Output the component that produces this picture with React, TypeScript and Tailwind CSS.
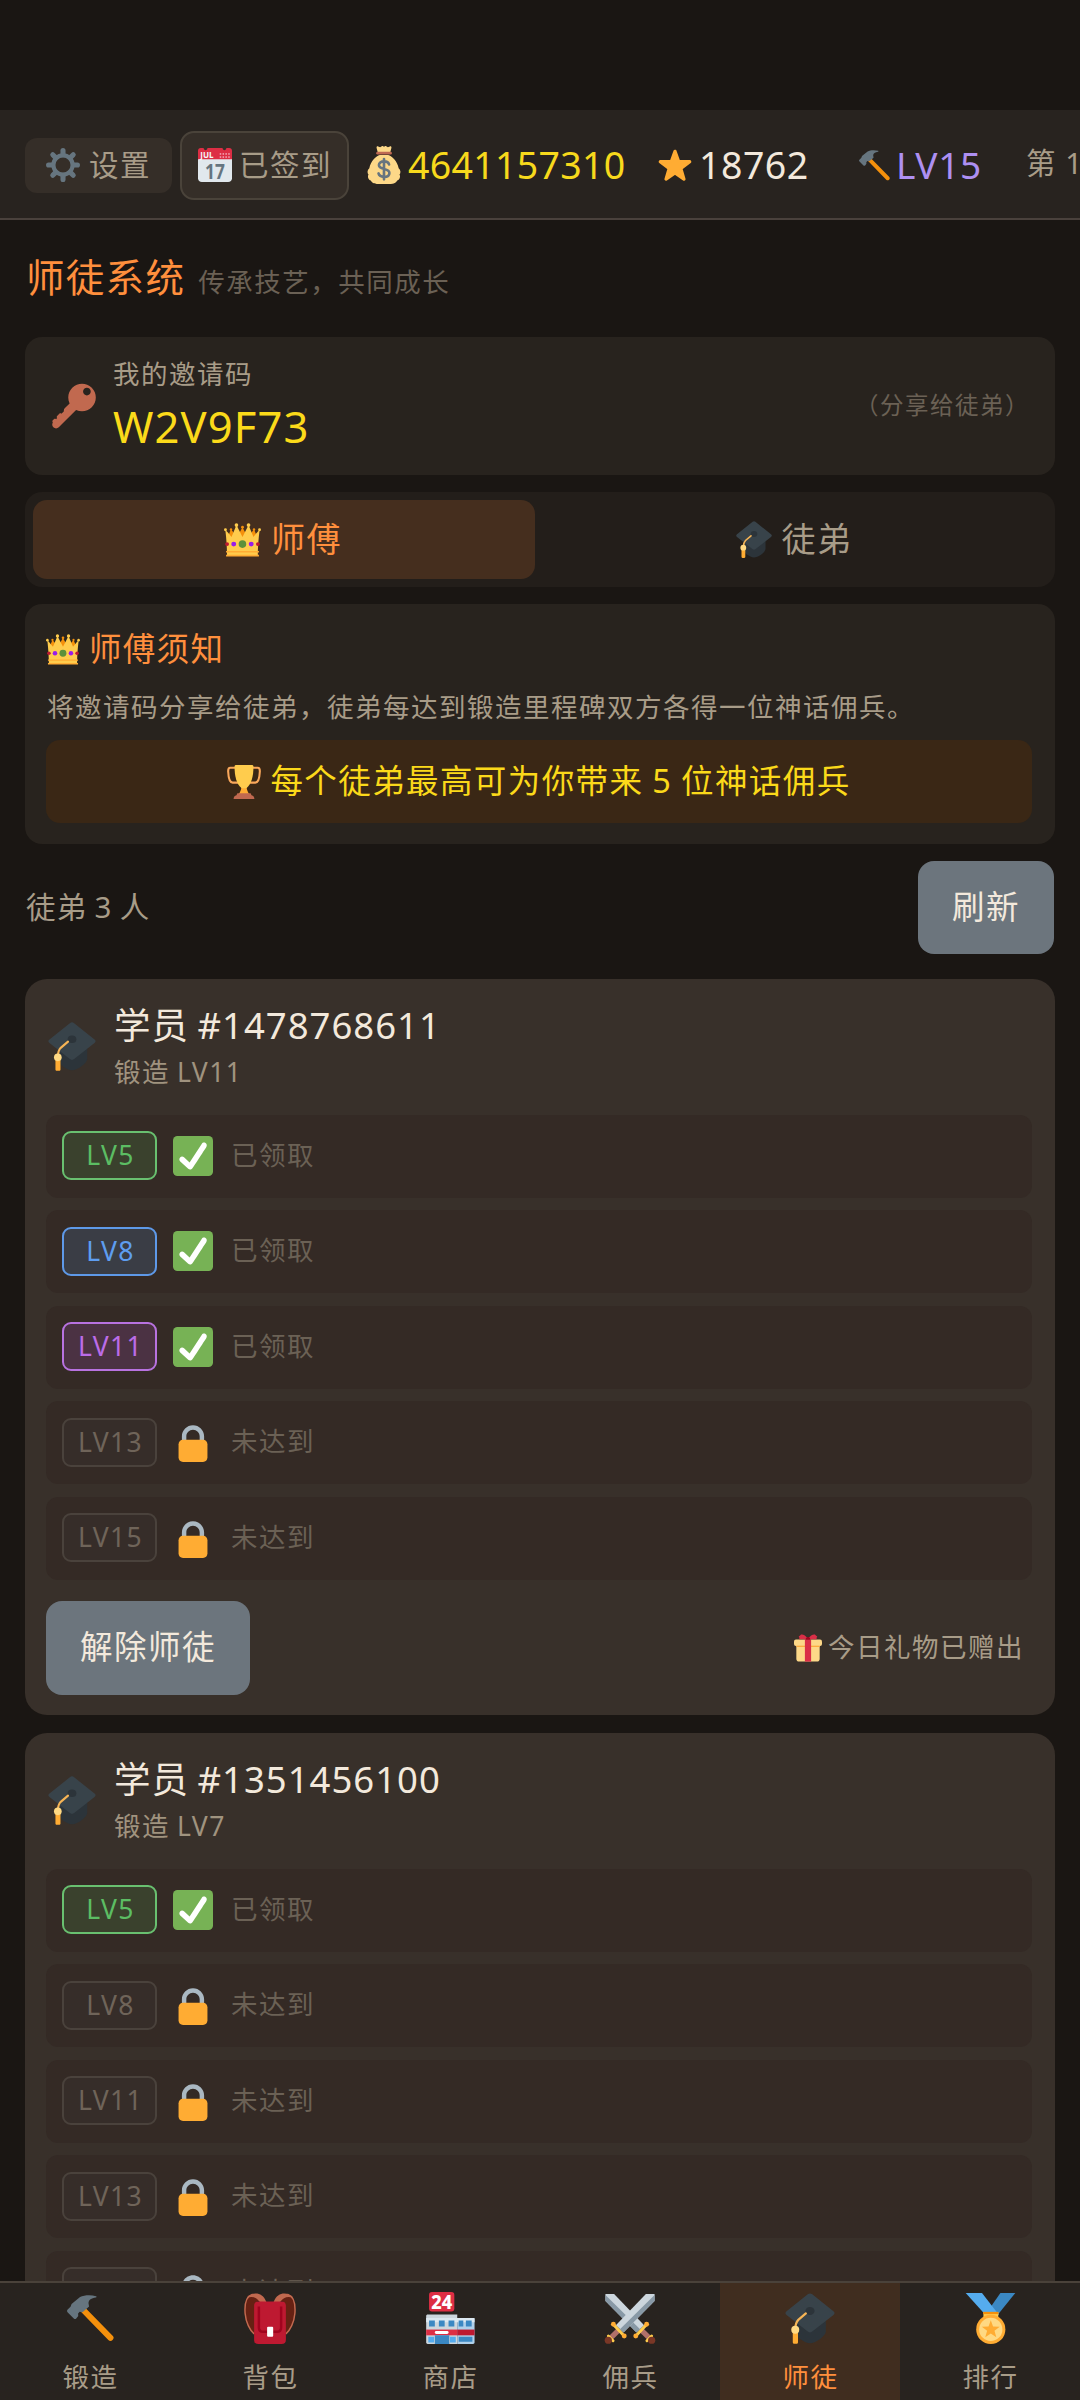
import React from "react";

type IconProps = { className?: string };

function Gear({ className }: IconProps) {
  return (
    <svg viewBox="0 0 36 36" className={className}>
      <g stroke="#66757F" strokeWidth="5.4" strokeLinecap="round">
        {[0, 45, 90, 135, 180, 225, 270, 315].map((a) => (
          <path key={a} d="M18 7V2.700" transform={`rotate(${a} 18 18)`} />
        ))}
      </g>
      <circle cx="18" cy="18" r="10.2" fill="none" stroke="#66757F" strokeWidth="4.4" />
    </svg>
  );
}

function Calendar({ className }: IconProps) {
  return (
    <svg viewBox="0 0 36 36" className={className}>
      <path fill="#E1E8ED" d="M0 11h36v21c0 2.2-1.8 4-4 4H4c-2.200 0-4-1.800-4-4z" />
      <path fill="#DD2E44" d="M36 12V3c0-1.700-1-3-3-3h-3c0 3-4 3-4 0H10c0 3-4 3-4 0H3C1 0 0 1.300 0 3v9z" />
      <text x="2.500" y="10.600" fontFamily="Noto Sans" fontWeight="700" fontSize="9.500" fill="#F5F8FA" textLength="14" lengthAdjust="spacingAndGlyphs" letterSpacing="0">JUL</text>
      <g fill="#F4ABBA">
        {[23, 26, 29, 32].map((x) => (
          <React.Fragment key={x}>
            <rect x={x} y="5.500" width="1.600" height="1.600" />
            <rect x={x} y="8.800" width="1.600" height="1.600" />
          </React.Fragment>
        ))}
      </g>
      <text x="7.500" y="32.500" fontFamily="Noto Sans" fontWeight="700" fontSize="23" fill="#66757F" textLength="21" lengthAdjust="spacingAndGlyphs" letterSpacing="0">17</text>
    </svg>
  );
}

function MoneyBag({ className }: IconProps) {
  return (
    <svg viewBox="0 0 36 36" className={className}>
      <path fill="#FDD888" d="M31.900 21C30.500 14 25.500 9.500 22 8.500h-8C10.500 9.500 5.500 14 4.100 21 2 22.500 2 25.500 3.300 27 2 29.500 3.500 32 5.500 32.700 6.800 35.500 10 36 12 36h12c2 0 5.200-.5 6.500-3.300 2-.7 3.500-3.200 2.200-5.700 1.300-1.500 1.300-4.500-.8-6z" />
      <path fill="#FDD888" d="M12.500 7.500L11 1.800c-.3-1 .5-1.800 1.500-1.400l1.800.8L16.300.1c.8-.2 1.200.2 1.700.9.500-.7.900-1.100 1.700-.9l2 1.100 1.800-.8c1-.4 1.800.4 1.500 1.400l-1.500 5.700z" />
      <path fill="#BF6952" d="M24 8H12c-1 0-1.500-.6-1.500-1.200S11 5.500 12 5.500h12c1 0 1.500.6 1.500 1.300S25 8 24 8z" />
      <path fill="none" stroke="#67757F" strokeWidth="2.500" strokeLinecap="round" d="M22.800 17.500c-.5-2-2.600-2.900-4.800-2.900-2.600 0-4.800 1.200-4.800 3.500 0 5 9.900 2.400 9.900 7.400 0 2.400-2.300 3.700-5.100 3.700-2.400 0-4.600-1-5.200-3.200M18 12.300v19.300" />
    </svg>
  );
}

function Star({ className }: IconProps) {
  return (
    <svg viewBox="0 0 36 36" className={className}>
      <path
        fill="#FFAC33"
        stroke="#FFAC33"
        strokeWidth="3.400"
        strokeLinejoin="round"
        d="M18 3.500l3.800 10.600 11.800.4-9.400 7.200 3.300 11.300L18 26.400l-9.500 6.600 3.300-11.300-9.400-7.200 11.800-.4z"
      />
    </svg>
  );
}

function Hammer({ className }: IconProps) {
  return (
    <svg viewBox="0 0 36 36" className={className}>
      <path stroke="#F4900C" strokeWidth="4.600" strokeLinecap="round" d="M12.500 11.500L33.300 32.800" />
      <path
        fill="#66757F"
        d="M.5 11.200L2.700 9 3.500 6.900 10 1.600C13 .1 18 -.3 22.300.9c.5.200.4.900-.2 1C18.500 2.300 16.300 4 16.500 6.500l.4 2.400-5 4.300-2.200-.3-1.200 1.200.1 2-1.500 1.900c-.6.600-1.300.5-1.900 0L.6 13.400c-.7-.6-.8-1.500-.1-2.200z"
      />
    </svg>
  );
}

function Key({ className }: IconProps) {
  return (
    <svg viewBox="0 0 36 36" className={className}>
      <path
        fill="#C1694F"
        d="M32.614 3.414C28.31-.89 21.332-.89 17.027 3.414c-3.391 3.392-4.098 8.439-2.144 12.535l-3.916 3.915c-.64.641-.841 1.543-.625 2.359l-1.973 1.972c-.479-.48-1.252-.48-1.731 0l-1.731 1.732c-.479.479-.479 1.253 0 1.732l-.867.864c-.479-.478-1.253-.478-1.731 0l-.866.867c-.479.479-.479 1.253 0 1.732.015.016.036.02.051.033-.794 1.189-.668 2.812.382 3.863 1.195 1.195 3.134 1.195 4.329 0L20.08 21.144c4.097 1.955 9.144 1.247 12.535-2.146 4.302-4.302 4.302-11.28-.001-15.584zm-1.731 5.195c-1.195 1.195-3.134 1.195-4.329 0-1.195-1.196-1.195-3.134 0-4.330 1.195-1.195 3.134-1.195 4.329 0 1.196 1.196 1.195 3.135 0 4.330z"
      />
    </svg>
  );
}

function Crown({ className }: IconProps) {
  return (
    <svg viewBox="0 1.500 36 33" className={className}>
      <path fill="#F4900C" d="M14.174 17.075L6.750 7.594l-3.722 9.481zM17.938 5.534l-6.563 12.389H24.500zM21.826 17.075l7.424-9.481 3.722 9.481z" />
      <path
        fill="#FFCC4D"
        d="M28.669 15.190L23.887 3.523l-5.880 11.668-.007.003-.007-.004-5.880-11.668L7.331 15.190C4.197 10.833 1.280 8.042 1.280 8.042S3 20.750 3 33h30c0-12.250 1.720-24.958 1.720-24.958s-2.917 2.791-6.051 7.148z"
      />
      <circle fill="#5C913B" cx="17.957" cy="22" r="3.688" />
      <circle fill="#981CEB" cx="26.463" cy="22" r="2.412" />
      <circle fill="#981CEB" cx="9.462" cy="22" r="2.412" />
      <circle fill="#BE1931" cx="33" cy="22" r="1.900" />
      <circle fill="#BE1931" cx="3" cy="22" r="1.900" />
      <g fill="#F4900C">
        <circle cx="6.800" cy="7.800" r="1.200" />
        <circle cx="18" cy="5.500" r="1.400" />
        <circle cx="29.200" cy="7.800" r="1.200" />
      </g>
      <g fill="#FFCC4D">
        <circle cx="23.887" cy="3.523" r="1.784" />
        <circle cx="12.106" cy="3.523" r="1.784" />
        <circle cx="34.600" cy="8.042" r="1.400" />
        <circle cx="1.400" cy="8.042" r="1.400" />
      </g>
      <path fill="#FFAC33" d="M2 28.700h32v1.400H2zM2 32.300h32v1.700H2z" />
    </svg>
  );
}

function GradCap({ className }: IconProps) {
  return (
    <svg viewBox="0 0 36 37" className={className}>
      <path fill="#2C343A" d="M7 18l11-4 11.500 6v8c0 3-7 8.500-11.500 8.500S7 31 7 28z" />
      <path fill="#38434A" d="M1 13.300L16.600.8c.9-.7 1.900-.7 2.800 0L35 13.300c1.100.9 1.100 1.700 0 2.600L19.600 28c-1 .8-2.200.8-3.200 0L1 15.900c-1.100-.9-1.100-1.700 0-2.600z" />
      <ellipse cx="18" cy="13" rx="3.300" ry="2.900" fill="#2C343A" />
      <path fill="none" stroke="#F6B455" strokeWidth="1.600" strokeLinecap="round" d="M15 14.800L9.500 19.500C8 21 7.500 22.500 7.300 26" />
      <path fill="#FFAC33" d="M5.500 27h3.800v8.800c0 .6-.4 1.100-1 1.100H6.500c-.6 0-1-.5-1-1.100z" />
      <circle cx="7.300" cy="26.700" r="2.900" fill="#FFD983" />
    </svg>
  );
}

function Trophy({ className }: IconProps) {
  return (
    <svg viewBox="0 0 36 36" className={className}>
      <path fill="none" stroke="#F9A75B" strokeWidth="2.200" d="M9 3H3.500C1.500 3 1.200 4.500 1.200 6.500 1.500 13 3 18.700 6 18.700h6M27 3h5.500c2 0 2.300 1.500 2.300 3.500C34.500 13 33 18.700 30 18.700h-6" />
      <path fill="#FFAC33" d="M15.500 21h5c0 4 1 7 3 10H12.500c2-3 3-6 3-10z" />
      <path fill="#FFCC4D" d="M8 1.500C8 .5 9 0 10 0h16c1 0 2 .5 2 1.500C28 12 26 20 20.500 24.500h-5C10 20 8 12 8 1.500z" />
      <path fill="#C1694F" d="M11 30h14l1 2c2 .3 3 2 3 4H7c0-2 1-3.700 3-4z" />
    </svg>
  );
}

function Check({ className }: IconProps) {
  return (
    <svg viewBox="0 0 36 36" className={className}>
      <rect width="36" height="36" rx="4" fill="#77B255" />
      <path
        fill="#FFF"
        d="M29.280 6.362c-1.156-.751-2.704-.422-3.458.736L14.936 23.877l-5.029-4.650c-1.014-.938-2.596-.875-3.533.138-.937 1.014-.875 2.596.139 3.533l7.209 6.666c.48.445 1.090.665 1.696.665.673 0 1.534-.282 2.099-1.139.332-.506 12.500-19.270 12.500-19.270.751-1.159.421-2.707-.737-3.458z"
      />
    </svg>
  );
}

function Lock({ className }: IconProps) {
  return (
    <svg viewBox="0 0 36 36" className={className}>
      <path fill="#AAB8C2" d="M18 3C12.477 3 8 7.477 8 13v10h4V13c0-3.313 2.686-6 6-6s6 2.687 6 6v10h4V13c0-5.523-4.477-10-10-10z" />
      <path fill="#FFAC33" d="M31 32c0 2.209-1.791 4-4 4H9c-2.209 0-4-1.791-4-4V20c0-2.209 1.791-4 4-4h18c2.209 0 4 1.791 4 4v12z" />
    </svg>
  );
}

function Gift({ className }: IconProps) {
  return (
    <svg viewBox="0 0 36 36" className={className}>
      <path fill="#FDD888" d="M3 13h30v19c0 2-1.500 3.500-3.500 3.500h-23C4.500 35.500 3 34 3 32z" />
      <rect y="7" width="36" height="8.500" rx="2.500" fill="#FDD888" />
      <path fill="#FCAB40" d="M3 15h30v1.700H3z" />
      <path fill="#DA2F47" d="M14 7h8v28.500h-8z" />
      <path fill="#DA2F47" d="M18 6.500C15 1.500 11 0 9 .8 8.500 2 7.500 2.500 6 3.300c1 1 1 2.200.8 3.400H18zM18 6.500C21 1.500 25 0 27 .8c.5 1.200 1.500 1.700 3 2.500-1 1-1 2.200-.8 3.400H18z" />
      <path fill="#A0041E" d="M15 7.300c0-2 1.300-3.300 3-3.300s3 1.300 3 3.300z" />
    </svg>
  );
}

function Backpack({ className }: IconProps) {
  return (
    <svg viewBox="0 0 36 36" className={className}>
      <path fill="#662113" d="M6 2C1 4 0 9 .6 15c.5 6 3.400 12 6.900 14V10C7.500 7 9 6 12 6c-1-3-3-4.500-6-4zM30 2c5 2 6 7 5.400 13-.5 6-3.400 12-6.900 14V10C28.500 7 27 6 24 6c1-3 3-4.500 6-4z" />
      <path fill="none" stroke="#C1694F" strokeWidth="1" d="M6 1.500C1.500 3 .3 9 .8 15c.5 6 3.200 11.500 6.200 14M30 1.500C34.500 3 35.700 9 35.200 15c-.5 6-3.200 11.500-6.200 14" />
      <path fill="#C1694F" d="M2 4C5 .3 12.500-1 15.500 7H11C8.500 3.500 6 3 2 4zM34 4C31 .3 23.500-1 20.500 7H25c2.500-3.500 5-4 9-3z" />
      <path fill="#BE1931" d="M7 9.500C7 7.500 8 6.500 10 6.500h16c2 0 3 1 3 3V33c0 2-1 3-3 3H10c-2 0-3-1-3-3z" />
      <path fill="none" stroke="#A0041E" strokeWidth="1.700" d="M10.300 10v14.500c0 2 1 3 3 3h9.400c2 0 3-1 3-3V10" />
      <rect x="16" y="24" width="4.200" height="7" rx=".7" fill="#FFF" />
    </svg>
  );
}

function Store({ className }: IconProps) {
  return (
    <svg viewBox="0 0 36 36" className={className}>
      <rect x="3.500" y="0" width="17.500" height="13.500" rx="2" fill="#DD2E44" />
      <text x="5" y="11.700" fontFamily="Noto Sans" fontWeight="800" fontSize="13.500" fill="#FFF" textLength="14.500" lengthAdjust="spacingAndGlyphs" letterSpacing="0">24</text>
      <path fill="#CCD6DD" d="M1.500 16.500c0-.6.500-1 1-1H23V36H2.500c-.5 0-1-.4-1-1z" />
      <path fill="#B0D0EA" d="M23 18h11c.5 0 1 .4 1 1v16c0 .500-.5 1-1 1H23z" />
      <path fill="#DCE8F0" d="M1.500 18H35v3H1.500z" />
      <path fill="#3B88C3" d="M3.500 19.800h4v4h-4zM10.300 19.800h4v4h-4zM17 19.800h4v4h-4zM24 19.800h3.200v4H24zM29 19.800h4v4h-4z" />
      <path fill="#DD2E44" d="M1.500 26H23v4H1.500z" />
      <path fill="#BE1931" d="M23 26h12v4H23z" />
      <path fill="#55ACEE" d="M3 31h4v4H3zM18 31h4v4h-4z" />
      <path fill="#3B88C3" d="M7.500 30h10v6h-10zM24 31h9.500v3.500H24z" />
      <rect x="7.500" y="27" width="9.500" height="2" rx="1" fill="#FFF" />
    </svg>
  );
}

function Sword({ transform }: { transform?: string }) {
  return (
    <g transform={transform}>
      <path fill="#CCD6DD" d="M29 1.300h6v5L13.500 28l-5.300-5z" />
      <path fill="#8899A6" d="M35 2v4.300L13.500 28l-2.300-2.300z" />
      <path stroke="#B0706A" strokeWidth="3.600" d="M10.500 26L4 32.500" />
      <path stroke="#FFCC4D" strokeWidth="2" strokeLinecap="round" d="M6.500 22.500l7.500 8M3 30.500l3.300 3.300" />
      <circle cx="6.500" cy="22.300" r="1.700" fill="#FFAC33" />
      <circle cx="14" cy="30.500" r="1.700" fill="#FFAC33" />
      <circle cx="3" cy="33.400" r="2.500" fill="#7A3726" />
    </g>
  );
}

function Swords({ className }: IconProps) {
  return (
    <svg viewBox="0 0 36 36" className={className}>
      <Sword transform="matrix(-1 0 0 1 36 0)" />
      <Sword />
    </svg>
  );
}

function Medal({ className }: IconProps) {
  return (
    <svg viewBox="0 0 36 36" className={className}>
      <path fill="#3B88C3" d="M25 0h10.500L23 15.500l-6-4z" />
      <path fill="#55ACEE" d="M.5 0H12l12 15.500h-9.500z" />
      <path fill="#FFCC4D" d="M13 13.500h10.500v4H13z" />
      <path fill="#F4900C" d="M12.800 13.300h10.800v1.600H12.800z" />
      <circle cx="18.200" cy="25.700" r="10.300" fill="#FFAC33" />
      <circle cx="18.200" cy="25.700" r="8.200" fill="#FFD983" />
      <path fill="#FFAC33" d="M18.200 19.200l1.600 4.500 4.700.1-3.700 2.900 1.300 4.600-3.900-2.700-3.900 2.700 1.300-4.600-3.700-2.900 4.700-.1z" />
    </svg>
  );
}

type Level = { label: string; tone: string; done: boolean };

const locked = "border-[#4a423c] bg-[#362d29] text-[#6f6459]";
const green = "border-[#69c070] bg-[#3a412d] text-[#5cbd63]";
const blue = "border-[#5e99e8] bg-[#3a3d45] text-[#5e9df0]";
const purple = "border-[#b872e0] bg-[#4b3243] text-[#bb6ce8]";

const students: { id: string; level: string; levels: Level[] }[] = [
  {
    id: "1478768611",
    level: "LV11",
    levels: [
      { label: "LV5", tone: green, done: true },
      { label: "LV8", tone: blue, done: true },
      { label: "LV11", tone: purple, done: true },
      { label: "LV13", tone: locked, done: false },
      { label: "LV15", tone: locked, done: false },
    ],
  },
  {
    id: "1351456100",
    level: "LV7",
    levels: [
      { label: "LV5", tone: green, done: true },
      { label: "LV8", tone: locked, done: false },
      { label: "LV11", tone: locked, done: false },
      { label: "LV13", tone: locked, done: false },
      { label: "LV15", tone: locked, done: false },
    ],
  },
];

function LevelRow({ level }: { level: Level }) {
  return (
    <div className="flex h-[83px] items-center rounded-xl bg-[#342a25] pb-px pl-4">
      <div className={`flex h-[49px] w-[95px] items-center justify-center rounded-[9px] border-2 pl-[2px] text-[26.5px] leading-none tracking-[1.3px] ${level.tone}`}>
        {level.label}
      </div>
      {level.done ? <Check className="ml-4 size-10" /> : <Lock className="ml-4 size-10" />}
      <span className="ml-[18px] text-[26.5px] tracking-[1.5px] text-[#6b6155]">{level.done ? "已领取" : "未达到"}</span>
    </div>
  );
}

function StudentCard({ student }: { student: (typeof students)[number] }) {
  return (
    <section className="h-[736px] shrink-0 rounded-[22px] bg-[#38302a] pl-[21px] pr-[23px] pt-[23px]">
      <div className="flex h-[112.500px]">
        <GradCap className="ml-[2px] mt-[20px] h-[49px] w-[48px]" />
        <div className="ml-[18px] whitespace-nowrap">
          <h3 className="text-[36.500px] leading-[47px] tracking-[1px] text-[#f3e9dc] [word-spacing:-2px]">学员 #{student.id}</h3>
          <p className="text-[26.500px] leading-[46px] tracking-[1.4px] text-[#a0937f] [word-spacing:-1px]">锻造 {student.level}</p>
        </div>
      </div>
      <div className="flex flex-col gap-[12.500px]">
        {student.levels.map((l) => (
          <LevelRow key={l.label} level={l} />
        ))}
      </div>
      <div className="mt-[21px] flex items-center justify-between">
        <button className="h-[94px] w-[204px] rounded-2xl bg-[#6c757d] text-[32.500px] tracking-[1.5px] text-[#f3e9dc]">解除师徒</button>
        <div className="flex items-center pr-[8px] text-[26.500px] tracking-[1.5px] text-[#a89c88]">
          <Gift className="mr-[6px] size-[28px]" />
          今日礼物已赠出
        </div>
      </div>
    </section>
  );
}

const tabs = [
  { label: "锻造", icon: Hammer, size: "w-[49px] h-[47px]" },
  { label: "背包", icon: Backpack, size: "size-[52px]" },
  { label: "商店", icon: Store, size: "size-[52px]" },
  { label: "佣兵", icon: Swords, size: "size-[52px]" },
  { label: "师徒", icon: GradCap, size: "w-[50px] h-[51px]", active: true },
  { label: "排行", icon: Medal, size: "size-[51px]" },
];

export default function App() {
  return (
    <div className="flex h-[2400px] w-[1080px] flex-col overflow-hidden bg-[#1a1613] pt-[110px] font-['Noto_Sans','Noto_Sans_CJK_SC',sans-serif]">
      <header className="flex h-[110px] shrink-0 items-center overflow-hidden whitespace-nowrap border-b-2 border-[#4a413c] bg-[#28231f] pl-[25px] pt-[2px] text-[29.500px] tracking-[1.5px] text-[#a89c88]">
        <div className="flex h-[55px] w-[147px] shrink-0 items-center rounded-xl bg-[#352e28] pl-[21px]">
          <Gear className="mr-[9px] size-[34px] shrink-0" />
          设置
        </div>
        <div className="ml-2 flex h-[69px] w-[169px] shrink-0 items-center rounded-[14px] border-2 border-[#4a433a] bg-[#352e28] pl-4">
          <Calendar className="mr-[7px] size-[34px] shrink-0" />
          已签到
        </div>
        <div className="ml-[16px] flex w-[293px] shrink-0 items-center text-[37.500px] tracking-[0.300px] text-[#f7d91c]">
          <MoneyBag className="mr-[5px] size-[38px] shrink-0" />
          4641157310
        </div>
        <div className="flex w-[200px] shrink-0 items-center text-[37.500px] tracking-[0.500px] text-[#f3e9dc]">
          <Star className="mr-[7px] size-[34px] shrink-0" />
          18762
        </div>
        <div className="flex w-[168px] shrink-0 items-center text-[37px] tracking-[0.700px] text-[#ae90f2]">
          <Hammer className="mr-[5px] h-[31px] w-[33px] shrink-0" />
          LV15
        </div>
        <span className="-mt-1 shrink-0 [word-spacing:-1px]">第 1</span>
      </header>

      <main className="flex min-h-0 flex-1 flex-col overflow-hidden px-[25px]">
        <div className="flex h-[117px] shrink-0 items-center whitespace-nowrap pl-px">
          <h1 className="-mt-[2px] text-[38.500px] tracking-[1.300px] text-[#ff8f3d]">师徒系统</h1>
          <p className="ml-[13px] pt-[9px] text-[26.500px] tracking-[1.500px] text-[#6b6155]">传承技艺，共同成长</p>
        </div>

        <section className="flex h-[138px] shrink-0 items-center rounded-[17px] bg-[#28231e] pl-[26px] pr-[25px]">
          <Key className="h-[46px] w-[45px]" />
          <div className="ml-[17px] pb-[9px]">
            <p className="-mt-[2px] text-[26.500px] leading-[50px] tracking-[1.500px] text-[#a89c88]">我的邀请码</p>
            <p className="text-[43.500px] leading-[54px] tracking-[1.100px] text-[#fbda1a]">W2V9F73</p>
          </div>
          <p className="ml-auto text-[23.500px] tracking-[1.500px] text-[#6b6155]">（分享给徒弟）</p>
        </section>

        <div className="mt-[17px] flex h-[95px] shrink-0 rounded-[17px] bg-[#231e1a] p-2 text-[34px] tracking-[1.500px]">
          <div className="flex w-[502px] items-center justify-center rounded-[14px] bg-[#452e1e] pr-[2px] text-[#ff8f3d]">
            <Crown className="mr-[10px] h-[34px] w-[37px]" />
            师傅
          </div>
          <div className="flex flex-1 items-center justify-center pl-[6px] text-[#a89c88]">
            <GradCap className="mr-[10px] h-[37px] w-[36px]" />
            徒弟
          </div>
        </div>

        <section className="mt-[17px] h-[240px] shrink-0 rounded-[17px] bg-[#28231e] pl-[21px] pr-[23px] pt-[20px]">
          <h2 className="flex h-[51px] items-center text-[32.500px] tracking-[1.300px] text-[#ff8f3d]">
            <Crown className="mr-[9px] h-[31px] w-[34px]" />
            师傅须知
          </h2>
          <p className="whitespace-nowrap pl-px text-[26.500px] leading-[64px] tracking-[1.500px] text-[#a89c88]">
            将邀请码分享给徒弟，徒弟每达到锻造里程碑双方各得一位神话佣兵。
          </p>
          <div className="mt-px flex h-[83px] items-center justify-center rounded-[14px] bg-[#3a2715] text-[32.500px] tracking-[1.400px] text-[#fbd91a] [word-spacing:-1px]">
            <Trophy className="mr-[9px] size-[34px]" />
            每个徒弟最高可为你带来 5 位神话佣兵
          </div>
        </section>

        <div className="mt-[17px] flex h-[93px] shrink-0 items-center justify-between pr-px">
          <p className="pl-px text-[29.500px] tracking-[1.300px] text-[#a89c88] [word-spacing:-2px]">徒弟 3 人</p>
          <button className="h-[93px] w-[136px] rounded-2xl bg-[#6c757d] text-[32.500px] tracking-[1.500px] text-[#f3e9dc]">刷新</button>
        </div>

        <div className="mt-[25px] flex flex-col gap-[18px]">
          {students.map((s) => (
            <StudentCard key={s.id} student={s} />
          ))}
        </div>
      </main>

      <nav className="grid h-[119px] shrink-0 grid-cols-6 border-t-2 border-[#4a423a] bg-[#28231f]">
        {tabs.map(({ label, icon: Icon, size, active }) => (
          <div
            key={label}
            className={`flex flex-col items-center pt-[5px] text-[26.500px] leading-[40px] tracking-[1.500px] ${active ? "bg-[#402d1f] text-[#ff8f3d]" : "text-[#a89c88]"}`}
          >
            <div className="flex h-[60px] items-center">
              <Icon className={size} />
            </div>
            <span className="mt-[9px] pl-px">{label}</span>
          </div>
        ))}
      </nav>
    </div>
  );
}
